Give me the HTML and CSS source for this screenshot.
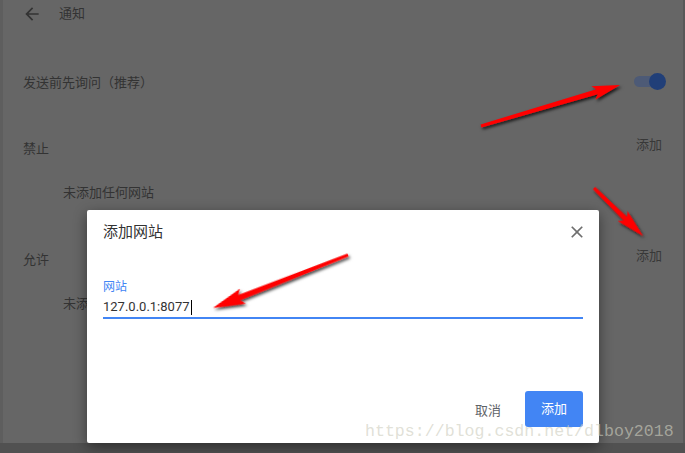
FILE: index.html
```html
<!DOCTYPE html>
<html lang="zh-CN">
<head>
<meta charset="utf-8">
<title>通知</title>
<link rel="stylesheet" href="styles.css">
</head>
<body>
<div class="app">
  <div class="main">
    <div class="header">
      <svg class="back" viewBox="0 0 24 24" width="20" height="20"><path d="M20 11H7.830l5.59-5.59L12 4l-8 8 8 8 1.41-1.41L7.83 13H20v-2z" fill="#333"/></svg>
      <span class="title">通知</span>
    </div>
    <div class="row">
      <span>发送前先询问（推荐）</span>
      <span class="toggle"><span class="knob"></span></span>
    </div>
    <div class="section">
      <div class="sec-head">
        <span class="sec-label">禁止</span>
        <span class="sec-add">添加</span>
      </div>
      <div class="empty">未添加任何网站</div>
    </div>
    <div class="section">
      <div class="sec-head">
        <span class="sec-label">允许</span>
        <span class="sec-add">添加</span>
      </div>
      <div class="empty">未添加任何网站</div>
    </div>
  </div>
  <div class="bottom"></div>

  <div class="dialog">
    <div class="dlg-head">
      <span class="dlg-title">添加网站</span>
      <svg class="close" viewBox="0 0 24 24" width="20" height="20"><path d="M19 6.41L17.59 5 12 10.59 6.41 5 5 6.41 10.59 12 5 17.590 6.41 19 12 13.41 17.59 19 19 17.59 13.41 12z" fill="#6e6e6e"/></svg>
    </div>
    <div class="field">
      <div class="field-label">网站</div>
      <div class="field-input">127.0.0.1:8077<span class="caret"></span></div>
    </div>
    <div class="actions">
      <span class="cancel">取消</span>
      <span class="confirm">添加</span>
    </div>
  </div>

  <svg class="arrows" width="685" height="453" viewBox="0 0 685 453">
    <defs>
      <filter id="sh" x="-20%" y="-50%" width="140%" height="200%">
        <feDropShadow dx="1.5" dy="2" stdDeviation="1.5" flood-color="#000" flood-opacity="0.75"/>
      </filter>
    </defs>
    <g filter="url(#sh)" fill="#ff0000">
      <g transform="translate(481 126) rotate(-16.4)">
        <polygon points="0,-1.5 121,-2.6 117,-7 145,0 117,7 121,2.6 0,1.5"/>
      </g>
      <g transform="translate(594 188) rotate(44.4)">
        <polygon points="0,-1.5 44,-2.6 40,-7 68.6,0 40,7 44,2.6 0,1.5"/>
      </g>
      <g transform="translate(348 255) rotate(158.6)">
        <polygon points="0,-1.5 117,-2.8 113,-8 145,0 113,8 117,2.8 0,1.5"/>
      </g>
    </g>
  </svg>

  <div class="watermark">https://blog.csdn.net/dlboy2018</div>
</div>
</body>
</html>
```

FILE: styles.css
```css
html, body {
  margin: 0;
  padding: 0;
  background: #666666;
}

.app {
  position: relative;
  width: 685px;
  height: 453px;
  display: flex;
  flex-direction: column;
  overflow: hidden;
  font-family: Roboto, "Noto Sans CJK SC", sans-serif;
  font-size: 13px;
  color: #333333;
}

.main {
  height: 443px;
  box-sizing: border-box;
  border-left: 3px solid #5e5e5e;
  border-right: 2px solid #585858;
  padding: 0 21px 0 20px;
  background: #666666;
}

.bottom {
  height: 10px;
  background: #515151;
}

.header {
  height: 28px;
  display: flex;
  align-items: center;
}

.back {
  margin-left: -1px;
  margin-right: 17px;
}

.title {
  line-height: 20px;
}

.row {
  margin-top: 33px;
  height: 41px;
  display: flex;
  align-items: center;
  justify-content: space-between;
}

.toggle {
  position: relative;
  width: 29px;
  height: 11px;
  border-radius: 6px;
  background: #4d5a76;
  margin-right: -1px;
}

.knob {
  position: absolute;
  right: -3px;
  top: -3px;
  width: 17px;
  height: 17px;
  border-radius: 50%;
  background: #213f78;
}

.section {
  margin-top: 23px;
}

.sec-head {
  height: 40px;
  display: flex;
  align-items: center;
  justify-content: space-between;
}

.sec-label {
  margin-top: 4px;
}

.sec-add {
  margin-bottom: 4px;
  color: #383838;
}

.empty {
  margin-top: 8px;
  height: 40px;
  line-height: 40px;
  padding-left: 40px;
}

.dialog {
  position: absolute;
  left: 87px;
  top: 210px;
  width: 512px;
  height: 233px;
  box-sizing: border-box;
  padding: 12px 16px 16px 16px;
  background: #ffffff;
  border-radius: 2px;
  box-shadow: 0 4px 14px rgba(0, 0, 0, 0.45);
  display: flex;
  flex-direction: column;
}

.dlg-head {
  display: flex;
  align-items: center;
  justify-content: space-between;
  height: 20px;
}

.dlg-title {
  font-size: 15px;
  line-height: 20px;
  color: #333333;
}

.close {
  margin-right: -4px;
}

.field {
  margin-top: 37px;
}

.field-label {
  font-size: 12px;
  line-height: 16px;
  height: 16px;
  color: #4285f4;
}

.field-input {
  margin-top: 3px;
  line-height: 18px;
  height: 18px;
  font-size: 13px;
  color: #333333;
  border-bottom: 2px solid #4285f4;
  padding-bottom: 1px;
  display: flex;
  align-items: center;
}

.caret {
  display: inline-block;
  width: 1px;
  height: 15px;
  background: #000;
  margin-left: 1px;
}

.actions {
  margin-top: auto;
  display: flex;
  justify-content: flex-end;
  align-items: center;
}

.cancel {
  color: #5f6368;
  font-size: 13px;
  margin-right: 24px;
}

.confirm {
  width: 58px;
  height: 36px;
  line-height: 36px;
  text-align: center;
  background: #4285f4;
  color: #ffffff;
  border-radius: 3px;
  font-size: 13px;
}

.arrows {
  position: absolute;
  left: 0;
  top: 0;
  pointer-events: none;
}

.watermark {
  position: absolute;
  left: 365px;
  top: 422px;
  font-family: "Liberation Mono", "DejaVu Sans Mono", monospace;
  font-size: 16.6px;
  line-height: 20px;
  color: rgba(205, 205, 190, 0.62);
  white-space: nowrap;
  pointer-events: none;
}
```
